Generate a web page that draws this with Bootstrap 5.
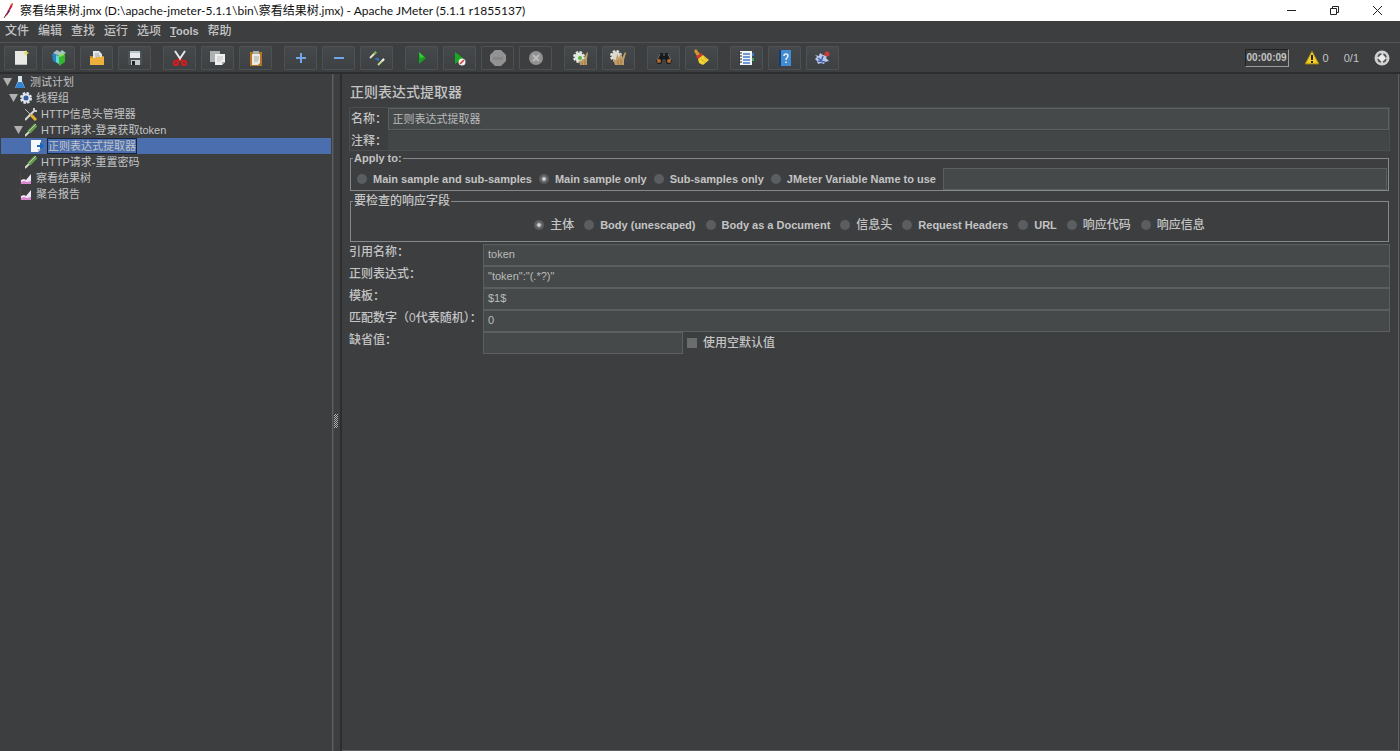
<!DOCTYPE html>
<html lang="zh-CN">
<head>
<meta charset="utf-8">
<meta name="viewport" content="width=device-width, initial-scale=1">
<title>Apache JMeter</title>
<link href="https://cdn.jsdelivr.net/npm/bootstrap@5.3.0/dist/css/bootstrap.min.css" rel="stylesheet">
<script src="https://cdn.jsdelivr.net/npm/bootstrap@5.3.0/dist/js/bootstrap.bundle.min.js" defer></script>
<style>
:root{--panel:#3c3e40;--ink:#c4c4c4;--field:#45494a;--edge:#5b5f60;--dark:#2b2d2e}
body{font-family:"Liberation Sans","Noto Sans CJK SC",sans-serif;font-size:11px;line-height:16px;background:var(--panel);color:var(--ink)}
svg{display:block;flex:none}
.title-bar{height:21px;background:#fff;color:#111;font-family:Lato,"Noto Sans CJK SC",sans-serif;font-size:12px;padding-left:2px;gap:5px}
.win-btn{width:43px;height:21px;padding:0;border:0;border-radius:0;color:#222;display:flex;align-items:center;justify-content:center}
.win-set{padding-right:1px}
.menu-bar{height:21px;padding:0 5px 2px;gap:9px}
.menu-bar a{color:var(--ink);text-decoration:none}
.cjk{font-size:12px;font-weight:500}
.latin{font-size:11px;font-weight:700}
.tool-bar{height:32px;border-top:1px solid #515455;border-bottom:2px solid var(--dark);padding:0 10px 0 4px;gap:12px}
.tool{width:33px;height:24px;padding:0;border:1px solid #4d5152;border-radius:1px;background:linear-gradient(#45494b,#3d4143);display:flex;align-items:center;justify-content:center}
.tool:disabled{background:var(--panel);opacity:1;border-color:#4d5152}
.tools{gap:5px}
.status{gap:15px;font-weight:400}
.alerts{gap:3px}
.clock{border:1px solid #222;border-right-color:#9a9c9d;border-bottom-color:#9a9c9d;height:18px;width:44px;font-size:10px;font-weight:700;text-align:center}
.tree-pane{width:333px;border-right:1px solid #5d6061;padding:0 1px}
.tree-row{height:16px;padding-left:2px;gap:4px;white-space:nowrap}
.l1{padding-left:8px}.l2{padding-left:13px}.l3{padding-left:19px}
.twist{width:9px;height:8px;padding:0;border:0;background:#b0b0b0;clip-path:polygon(0 0,100% 0,50% 100%);margin-right:-2px}
.twist.leaf{visibility:hidden}
.chosen{background:#4b6eaf}
.chosen span{outline:1px solid #17233a;line-height:14px}
.splitter{width:9px;border-right:2px solid var(--dark);border-left:1px solid #484b4c}
.grip{width:4px;height:14px;background:repeating-conic-gradient(#aaa 0 25%,#3c3f41 0 50%) 0 0/2px 2px}
.main-pane{border-right:1px solid #5d6061;border-bottom:1px solid #5d6061;margin-right:1px;padding:8px 8px 0 7px}
.heading{font-size:14px;line-height:20px;font-weight:500;margin:0;padding-left:1px;height:25px}
.ident{border:1px solid #4b4e50;height:44px;gap:1px}
.ident label{width:39px;padding-left:1px}
.field{background:var(--field);border:1px solid var(--edge);border-radius:0;color:#bbb;font-size:11px;line-height:16px;padding:0 4px 2px;height:22px;min-height:0;min-width:0}
.field:focus{background:var(--field);color:#ddd;box-shadow:none;border-color:#7a9ad0}
.bare{border-color:transparent;height:19px;background:#424647}
.group{border:1px solid #85898a;margin:0 1px;padding:0;min-width:0}
.group legend{float:none;width:auto;margin:0 0 0 2px;padding:0 1px;line-height:15px;height:15px}
.fields{margin-top:3px}
.choices{gap:10px}
.scope{gap:7px;padding:2px 1px 0 6px}
.choice{gap:6px;display:flex;align-items:center;white-space:nowrap}
.dot,.tick{appearance:none;width:10px;height:10px;margin:0;background:#5b5e60;flex:none}
.dot{border-radius:50%}
.dot:checked{background:radial-gradient(circle,#d4d4d4 0 1px,#5b5e60 3px)}
.tick{background:#6a6d6e}
.tick:checked{background:#bbb}
.rows{display:grid;grid-template-columns:134px 1fr;margin-top:2px}
.rows label.cap{line-height:16px;white-space:nowrap}
.short{width:200px}
</style>
</head>
<body class="vh-100 d-flex flex-column overflow-hidden">
<header class="title-bar d-flex align-items-center">
  <svg width="13" height="17" viewBox="0 0 13 17"><path d="M3 15L9 2l2-1-1 4-5 8z" fill="#c4213c"/><path d="M9 2l2-1-1 4z" fill="#e26a33"/><path d="M6 8l2 1-3 4z" fill="#5b2270"/><path d="M2 16l3-5" stroke="#7d2338"/></svg>
  <span class="flex-grow-1 text-nowrap">察看结果树.jmx (D:\apache-jmeter-5.1.1\bin\察看结果树.jmx) - Apache JMeter (5.1.1 r1855137)</span>
  <div class="win-set d-flex">
    <button class="btn win-btn" aria-label="最小化"><svg width="11" height="11"><path d="M1 5.500h9" stroke="#222"/></svg></button>
    <button class="btn win-btn" aria-label="还原"><svg width="11" height="11" fill="none" stroke="#222"><path d="M1.500 3.500h6v6h-6zM3.500 3V1.500h6v6H8"/></svg></button>
    <button class="btn win-btn" aria-label="关闭"><svg width="11" height="11"><path d="M1 1l9 9M10 1l-9 9" stroke="#222"/></svg></button>
  </div>
</header>
<nav class="menu-bar d-flex align-items-center cjk">
  <a href="#">文件</a><a href="#">编辑</a><a href="#">查找</a><a href="#">运行</a><a href="#">选项</a><a href="#" class="latin"><u>T</u>ools</a><a href="#">帮助</a>
</nav>
<div class="tool-bar d-flex align-items-center">
  <div class="tools d-flex">
    <button class="btn tool" aria-label="新建"><svg width="16" height="16"><path d="M2 1h12v14H2z" fill="#e9e9e6"/><path d="M2 14h12v1H2z" fill="#bbb"/><path d="M13 0l1 2 2 1-2 1-1 2-1-2-2-1 2-1z" fill="#e4dd62"/></svg></button>
    <button class="btn tool" aria-label="模板"><svg width="16" height="16"><path d="M1 4l5-2v11l-4-2z" fill="#2585b8"/><path d="M2 3l4-3 3 2 2-2 4 3-6 3z" fill="#a9c3c4"/><path d="M5 5l4 2v8l-4-3z" fill="#5fd7e4"/><path d="M8 6l6-2v8l-6 4z" fill="#35b62c"/><path d="M6 6l7-3v2L9 7z" fill="#8ae25d"/></svg></button>
    <button class="btn tool" aria-label="打开"><svg width="16" height="16"><path d="M1 6h14v9H1z" fill="#c98a20"/><path d="M4 1h6l3 3v6H4z" fill="#e3e6ea"/><path d="M6 4h4M6 6h5" stroke="#9aa"/><path d="M1 8h5l1-1h8v8H1z" fill="#eeb03c"/></svg></button>
    <button class="btn tool" aria-label="保存"><svg width="16" height="16"><path d="M1 1h13l1 1v13H1z" fill="#4c5356"/><path d="M3 1h10v7H3z" fill="#e7eaec"/><path d="M3 1h10v2H3z" fill="#b9c4ca"/><path d="M4 10h9v5H4z" fill="#c7cbcd"/><path d="M5 11h3v4H5z" fill="#222"/></svg></button>
  </div>
  <div class="tools d-flex">
    <button class="btn tool" aria-label="剪切"><svg width="16" height="16" fill="none"><path d="M3 1l6 9M13 1l-6 9" stroke="#e4e8ea" stroke-width="2"/><path d="M7 9l-2 2M9 9l2 2" stroke="#d11" stroke-width="2"/><circle cx="4" cy="13" r="2" stroke="#e01818" stroke-width="2"/><circle cx="12" cy="13" r="2" stroke="#e01818" stroke-width="2"/></svg></button>
    <button class="btn tool" aria-label="复制"><svg width="17" height="16"><path d="M1 1h10v11H1z" fill="#aeb1b2"/><path d="M6 4h10v8l-3 3H6z" fill="#eeefee"/><path d="M8 7h6M8 9h6M8 11h4" stroke="#c3c3c3"/><path d="M13 15v-3h3z" fill="#aaa"/></svg></button>
    <button class="btn tool" aria-label="粘贴"><svg width="16" height="16"><path d="M2 2h12v14H2z" fill="#b77522"/><path d="M4 4h8v9l-2 2H4z" fill="#e9e9e5"/><path d="M5 1h6v3H5z" fill="#aaaead"/><path d="M6 7h5M6 9h5M6 11h4" stroke="#aaa"/></svg></button>
  </div>
  <div class="tools d-flex">
    <button class="btn tool" aria-label="展开"><svg width="16" height="16"><path d="M8 3v10M3 8h10" stroke="#71a6e8" stroke-width="2"/></svg></button>
    <button class="btn tool" aria-label="收起"><svg width="16" height="16"><path d="M3 8h10" stroke="#71a6e8" stroke-width="2"/></svg></button>
    <button class="btn tool" aria-label="切换"><svg width="16" height="16"><path d="M1 8l6-6" stroke="#dfe2c4" stroke-width="2"/><path d="M5 4l2-2" stroke="#79b33e" stroke-width="2"/><path d="M9 15l6-6" stroke="#c8d696" stroke-width="2"/><path d="M13 11l2-2" stroke="#eee" stroke-width="2"/><path d="M6 8h4v3H9L6 9z" fill="#3670b7"/></svg></button>
  </div>
  <div class="tools d-flex">
    <button class="btn tool" aria-label="启动"><svg width="16" height="16"><path d="M5 2l7 6-7 6z" fill="#15a51d"/><path d="M5 2l5 5-4 1z" fill="#38ca3a"/></svg></button>
    <button class="btn tool" aria-label="不停顿开始"><svg width="16" height="16"><path d="M3 2l8 6-8 6z" fill="#17aa1f"/><circle cx="10" cy="12" r="3.500" fill="#f1eeee"/><path d="M8 14l4-4" stroke="#d23939" stroke-width="1.500"/></svg></button>
    <button class="btn tool" disabled aria-label="停止"><svg width="18" height="18"><path d="M6 1h6l5 5v6l-5 5H6l-5-5V6z" fill="#929292"/><path d="M4 8h10v3H4z" fill="#868686"/></svg></button>
    <button class="btn tool" disabled aria-label="关闭线程"><svg width="16" height="16"><circle cx="8" cy="8" r="7" fill="#929292"/><path d="M5 5l6 6M11 5l-6 6" stroke="#bbb" stroke-width="2"/></svg></button>
  </div>
  <div class="tools d-flex">
    <button class="btn tool" aria-label="清除"><svg width="16" height="16"><circle cx="6" cy="7" r="5" fill="none" stroke="#e4e8e2" stroke-width="2" stroke-dasharray="2.500 1.430"/><circle cx="6" cy="7" r="4.500" fill="#e2e8de"/><path d="M11 9l3-7 1 1-1 6v6H7l-1-4 4-1z" fill="#c19d68"/><circle cx="7" cy="8" r="2" fill="#5cb43c"/><path d="M9 12v3M12 10v5" stroke="#9a7749"/></svg></button>
    <button class="btn tool" aria-label="清除全部"><svg width="17" height="16"><circle cx="6" cy="6" r="5" fill="none" stroke="#e4e4dd" stroke-width="2" stroke-dasharray="2.500 1.430"/><circle cx="6" cy="6" r="4.500" fill="#dcdad0"/><path d="M3 9l3 1 1-6 2 4 2-5 1 5 3-6 1 1-2 7v5H5z" fill="#c19d68"/><path d="M8 10v5M11 9v6" stroke="#9a7749"/></svg></button>
  </div>
  <div class="tools d-flex">
    <button class="btn tool" aria-label="查找"><svg width="18" height="16"><path d="M5 3h3v3h2V3h3l4 8-2 3h-3l-2-5H8l-2 5H3l-2-3z" fill="#17191a"/><path d="M5 4L2 10M13 4l3 6" stroke="#777"/><circle cx="4" cy="11" r="2" fill="#b76832"/><circle cx="14" cy="11" r="2" fill="#b76832"/></svg></button>
    <button class="btn tool" aria-label="重置搜索"><svg width="17" height="17"><path d="M1 2l2-2 4 5-3 2z" fill="#d59831"/><path d="M3 8l5-4 2 2-5 4z" fill="#d8382a"/><path d="M5 10l5-4 6 5-6 5-4-2z" fill="#f0d234"/><path d="M8 10l4 3M11 8l3 3" stroke="#cdae25"/></svg></button>
  </div>
  <div class="tools d-flex">
    <button class="btn tool" aria-label="函数助手"><svg width="17" height="16"><path d="M2 1h12v14H2z" fill="#f4f5f6"/><path d="M5 4h7M5 7h7M5 10h7M5 13h7" stroke="#427bc6" stroke-width="1.500"/><path d="M1 3h3M1 6h3M1 9h3M1 12h3" stroke="#222"/><path d="M14 3h2v3h-2z" fill="#3e76c1"/><path d="M14 8h2v3h-2z" fill="#42a35d"/></svg></button>
    <button class="btn tool" aria-label="帮助"><svg width="16" height="16"><path d="M2 0h3v16H2z" fill="#153e70"/><path d="M4 0h10v16H4z" fill="#438bd0"/><path d="M7 6q0-2 2-2t2 2q0 1-2 3v1M9 11.500v1.500" fill="none" stroke="#e6f0fa" stroke-width="1.500"/></svg></button>
    <button class="btn tool" aria-label="日志"><svg width="17" height="16"><path d="M1 5l4 1 1-3 3 2 4 1-1 2 3 3-4 1-1 2-3-1-3 1-1-3-2-2 2-2z" fill="#b8c8e6"/><path d="M4 8l4 3M9 6l-2 6M4 11l7 1" stroke="#4662b0" stroke-width="1.500"/><circle cx="13" cy="4" r="2.500" fill="#cf3b34"/></svg></button>
  </div>
  <div class="status d-flex align-items-center ms-auto">
    <div class="clock">00:00:09</div>
    <div class="alerts d-flex align-items-center"><svg width="16" height="15"><path d="M8 1l7 13H1z" fill="#f4cf1d" stroke="#8f7a15"/><path d="M8 5v5M8 11v2" stroke="#222" stroke-width="2"/></svg><span>0</span></div>
    <span>0/1</span>
    <svg width="16" height="16"><circle cx="8" cy="8" r="7.500" fill="#d1d1d1"/><circle cx="8" cy="8" r="4" fill="none" stroke="#555" stroke-width="2" stroke-dasharray="4 2.280" stroke-dashoffset="-1"/><path d="M8 5v6M5 8h6" stroke="#eee" stroke-width="3"/></svg>
  </div>
</div>
<main class="d-flex flex-grow-1">
  <aside class="tree-pane flex-shrink-0">
    <div class="tree-row d-flex align-items-center"><button class="twist" aria-label="折叠"></button><svg width="12" height="14"><path d="M4 1h4v5l3 7H1l3-7z" fill="#d6e4ee"/><path d="M4 7h4l3 6H1z" fill="#3384d0"/></svg><span>测试计划</span></div>
    <div class="tree-row l1 d-flex align-items-center"><button class="twist" aria-label="折叠"></button><svg width="12" height="14"><circle cx="6" cy="7" r="5" fill="none" stroke="#dfe6ee" stroke-width="2" stroke-dasharray="2.500 1.420"/><circle cx="6" cy="7" r="3.500" fill="#345c9c" stroke="#dfe6ee" stroke-width="2"/></svg><span>线程组</span></div>
    <div class="tree-row l2 d-flex align-items-center"><i class="twist leaf"></i><svg width="12" height="14"><path d="M0 13L9 4" stroke="#d8d8d8" stroke-width="2"/><path d="M0 2l6 6" stroke="#bbb"/><path d="M6 8l5 5" stroke="#e6b42c" stroke-width="3"/><path d="M9 1v3h3" fill="none" stroke="#ccc" stroke-width="2"/></svg><span>HTTP信息头管理器</span></div>
    <div class="tree-row l2 d-flex align-items-center"><button class="twist" aria-label="折叠"></button><svg width="12" height="14"><path d="M0 13l5-5" stroke="#d6d6c4" stroke-width="2"/><path d="M4 9l7-7" stroke="#679a4f" stroke-width="4"/><path d="M4 8l7-7" stroke="#b5d4a5"/></svg><span>HTTP请求-登录获取token</span></div>
    <div class="tree-row l3 chosen d-flex align-items-center"><i class="twist leaf"></i><svg width="13" height="14"><path d="M0 1h10v9l-3 3H0z" fill="#f5f7fa"/><path d="M7 13v-3h3z" fill="#bcc6d2"/><path d="M6 6h3V3l4 4-4 4V8H6z" fill="#1668c4"/></svg><span>正则表达式提取器</span></div>
    <div class="tree-row l2 d-flex align-items-center"><i class="twist leaf"></i><svg width="12" height="14"><path d="M0 13l5-5" stroke="#d6d6c4" stroke-width="2"/><path d="M4 9l7-7" stroke="#679a4f" stroke-width="4"/><path d="M4 8l7-7" stroke="#b5d4a5"/></svg><span>HTTP请求-重置密码</span></div>
    <div class="tree-row l1 d-flex align-items-center"><i class="twist leaf"></i><svg width="12" height="14"><path d="M1 13v-4l3-1 2 1 5-6v10z" fill="#efe6f5"/><path d="M1 13v-2l3-1 3 1 4-1v3z" fill="#d687cd"/><path d="M0.500 1v13" stroke="#59404f"/></svg><span>察看结果树</span></div>
    <div class="tree-row l1 d-flex align-items-center"><i class="twist leaf"></i><svg width="12" height="14"><path d="M1 13v-4l3-1 2 1 5-6v10z" fill="#efe6f5"/><path d="M1 13v-2l3-1 3 1 4-1v3z" fill="#d687cd"/><path d="M0.500 1v13" stroke="#59404f"/></svg><span>聚合报告</span></div>
  </aside>
  <div class="splitter flex-shrink-0 d-flex align-items-center pt-3"><div class="grip"></div></div>
  <section class="main-pane flex-grow-1">
    <h1 class="heading">正则表达式提取器</h1>
    <div class="ident d-flex flex-column">
      <div class="d-flex align-items-center"><label class="cjk" for="name">名称：</label><input class="form-control field" id="name" value="正则表达式提取器"></div>
      <div class="d-flex align-items-center"><label class="cjk" for="note">注释：</label><input class="form-control field bare" id="note"></div>
    </div>
    <fieldset class="group">
      <legend class="latin">Apply to:</legend>
      <div class="scope d-flex align-items-center latin">
        <label class="choice"><input class="dot" type="radio" name="scope">Main sample and sub-samples</label>
        <label class="choice"><input class="dot" type="radio" name="scope" checked>Main sample only</label>
        <label class="choice"><input class="dot" type="radio" name="scope">Sub-samples only</label>
        <label class="choice"><input class="dot" type="radio" name="scope">JMeter Variable Name to use</label>
        <input class="form-control field flex-fill" aria-label="JMeter Variable Name">
      </div>
    </fieldset>
    <fieldset class="group fields">
      <legend class="cjk">要检查的响应字段</legend>
      <div class="choices d-flex align-items-center justify-content-center py-2 latin">
        <label class="choice cjk"><input class="dot" type="radio" name="part" checked>主体</label>
        <label class="choice"><input class="dot" type="radio" name="part">Body (unescaped)</label>
        <label class="choice"><input class="dot" type="radio" name="part">Body as a Document</label>
        <label class="choice cjk"><input class="dot" type="radio" name="part">信息头</label>
        <label class="choice"><input class="dot" type="radio" name="part">Request Headers</label>
        <label class="choice"><input class="dot" type="radio" name="part">URL</label>
        <label class="choice cjk"><input class="dot" type="radio" name="part">响应代码</label>
        <label class="choice cjk"><input class="dot" type="radio" name="part">响应信息</label>
      </div>
    </fieldset>
    <div class="rows">
      <label class="cap cjk" for="ref">引用名称：</label><input class="form-control field" id="ref" value="token">
      <label class="cap cjk" for="regex">正则表达式：</label><input class="form-control field" id="regex" value='"token":"(.*?)"'>
      <label class="cap cjk" for="tpl">模板：</label><input class="form-control field" id="tpl" value="$1$">
      <label class="cap cjk" for="match">匹配数字（0代表随机）：</label><input class="form-control field" id="match" value="0">
      <label class="cap cjk" for="def">缺省值：</label>
      <div class="d-flex align-items-center"><input class="form-control field short me-1" id="def"><label class="choice cjk"><input class="tick" type="checkbox">使用空默认值</label></div>
    </div>
  </section>
</main>
</body>
</html>
